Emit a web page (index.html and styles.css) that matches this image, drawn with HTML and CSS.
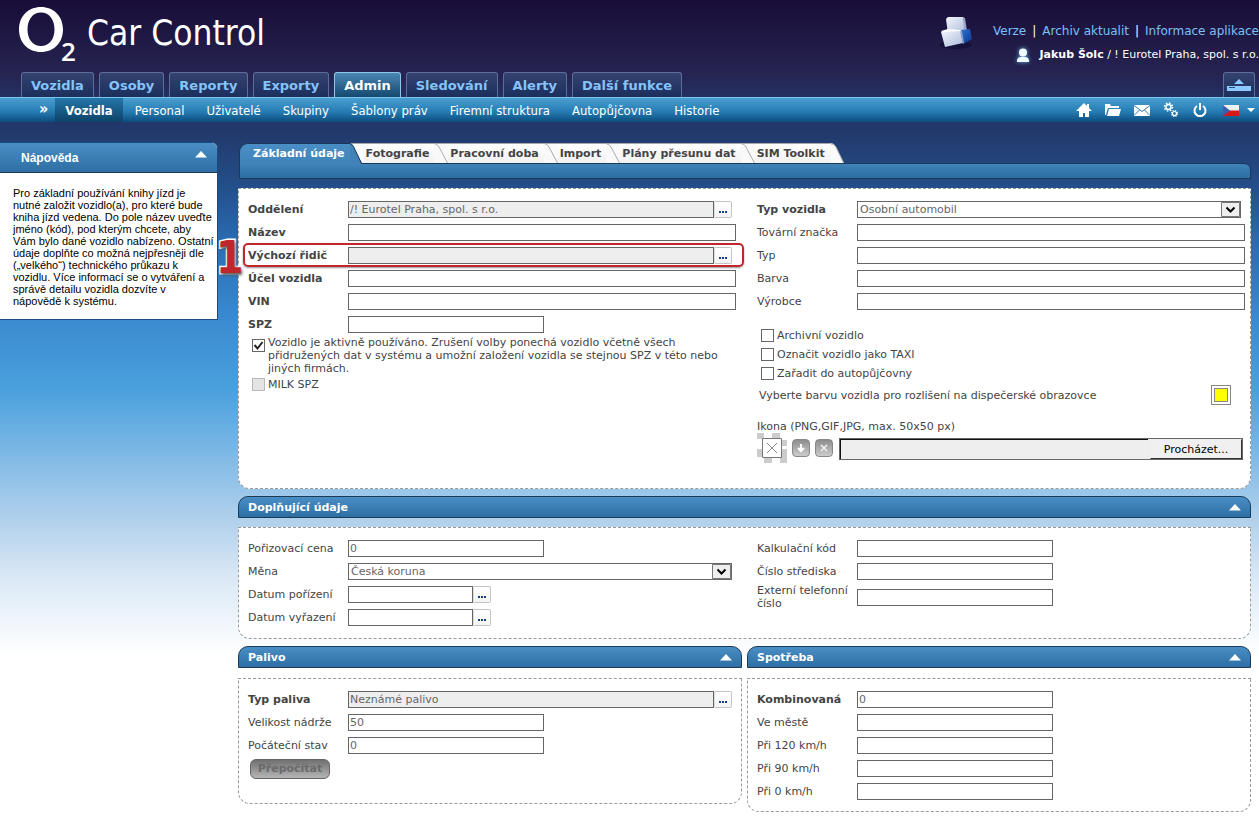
FILE: index.html
```html
<!DOCTYPE html>
<html lang="cs">
<head>
<meta charset="utf-8">
<title>O2 Car Control</title>
<link rel="stylesheet" href="styles.css">
</head>
<body>
<header class="header">
  <div class="brand">
    <svg class="logo" width="64" height="66" viewBox="0 0 64 66" role="img" aria-label="O2">
      <path fill="#fff" fill-rule="evenodd" d="M23 7C35.500 7 45 16 45 29.500S35.500 52 23 52 1 43 1 29.500 10.500 7 23 7ZM23 12.500C14.500 12.500 9.500 20 9.500 29.500S14.500 46 23 46 36.500 39 36.500 29.500 31.500 12.500 23 12.500Z"/>
      <text x="43" y="61" class="logo-sub">2</text>
    </svg>
    <h1 class="title">Car Control</h1>
  </div>
  <div class="account">
    <svg width="38" height="38" viewBox="0 0 38 38" aria-hidden="true">
      <defs>
        <linearGradient id="cube" x1="0" y1="0" x2="1" y2="1"><stop offset="0" stop-color="#f4f6fa"/><stop offset="1" stop-color="#a9b9dc"/></linearGradient>
        <linearGradient id="cubeBlue" x1="0" y1="0" x2="1" y2="1"><stop offset="0" stop-color="#2f74cf"/><stop offset="1" stop-color="#0b3594"/></linearGradient>
      </defs>
      <ellipse cx="16" cy="31" rx="16" ry="4" fill="#0a0830" opacity=".5"/>
      <path d="M6 5l2-2 15 0 3 14-1 3H8z" fill="url(#cube)"/>
      <path d="M23 3l2 1 2 13-3 1z" fill="#98a6c6"/>
      <path d="M21 16l9-1 2 10-9 5z" fill="url(#cubeBlue)"/>
      <path d="M1 17l7-2 12 1 2 2-18 2z" fill="#fff"/>
      <path d="M1 18l19-1 3 12-18 4z" fill="url(#cube)"/>
      <path d="M20 17l2 0 2 12-1 1z" fill="#8da3d3"/>
    </svg>
    <div class="account-text">
      <nav class="links"><a href="#">Verze</a><span>|</span><a href="#">Archiv aktualit</a><span>|</span><a href="#">Informace aplikace</a></nav>
      <div class="user">
        <svg class="user-icon" width="14" height="15" viewBox="0 0 14 15" aria-hidden="true"><circle cx="7" cy="4.500" r="4" fill="#eefaff"/><path d="M1 14v-2q1-3 4-3h4q3 0 4 3v2z" fill="#eefaff"/></svg>
        <span><b>Jakub Šolc</b> / ! Eurotel Praha, spol. s r.o.</span>
      </div>
    </div>
  </div>
</header>
<nav class="tabs">
  <a href="#">Vozidla</a><a href="#">Osoby</a><a href="#">Reporty</a><a href="#">Exporty</a><a href="#" class="on">Admin</a><a href="#">Sledování</a><a href="#">Alerty</a><a href="#">Další funkce</a>
  <button class="fold" type="button" aria-label="Skrýt záhlaví">
    <svg width="24" height="14" viewBox="0 0 24 14" aria-hidden="true"><path d="M12 1l5 5H7zM0 8h24v5H0z" fill="#8ccbff"/><path d="M2 9.500h6" stroke="#27487c"/></svg>
  </button>
</nav>
<nav class="subnav">
  <span class="more">»</span>
  <a href="#" class="on">Vozidla</a><a href="#">Personal</a><a href="#">Uživatelé</a><a href="#">Skupiny</a><a href="#">Šablony práv</a><a href="#">Firemní struktura</a><a href="#">Autopůjčovna</a><a href="#">Historie</a>
  <div class="tools">
    <svg width="16" height="16" viewBox="0 0 16 16" fill="#fff" aria-hidden="true"><path d="M8 1L0 9h3v6h4v-4h2v4h4V9h3l-3-3V2h-2v2z"/></svg>
    <svg width="16" height="16" viewBox="0 0 16 16" fill="#fff" aria-hidden="true"><path d="M0 2h5l1 2h8v2H3L2 9 1 13H0z"/><path d="M4 7h12l-2 7H2z"/></svg>
    <svg width="16" height="16" viewBox="0 0 16 16" aria-hidden="true"><path fill="#fff" d="M0 3h16v11H0z"/><path d="M0 3.500l8 6 8-6M0 13.500l5.500-5.500M16 13.500L10.500 8" fill="none" stroke="#2c7fb8"/></svg>
    <svg width="16" height="16" viewBox="0 0 16 16" fill="none" stroke="#fff" aria-hidden="true"><circle cx="5.500" cy="5" r="2.500" stroke-width="1.500"/><circle cx="5.500" cy="5" r="4" stroke-width="1.500" stroke-dasharray="1.600 1.540"/><circle cx="11.500" cy="11.500" r="2" stroke-width="1.200"/><circle cx="11.500" cy="11.500" r="3" stroke-width="1.200" stroke-dasharray="1.200 1.160"/></svg>
    <svg width="16" height="16" viewBox="0 0 16 16" fill="none" stroke="#fff" stroke-width="2" aria-hidden="true"><path d="M5 4a5.500 5.500 0 1 0 6 0M8 1v7"/></svg>
    <span class="lang">
      <svg width="16" height="11" viewBox="0 0 16 11" aria-hidden="true"><path fill="#f2f2f2" d="M0 0h16v6H0z"/><path fill="#d8161b" d="M0 5.500h16V11H0z"/><path fill="#3a5fae" d="M0 0l7 5.500L0 11z"/></svg>
      <svg width="8" height="5" viewBox="0 0 8 5" aria-hidden="true"><path fill="#fff" d="M0 0h8L4 4z"/></svg>
    </span>
  </div>
</nav>

<div class="page">
  <aside class="help">
    <h2 class="help-head">Nápověda
      <svg width="12" height="7" viewBox="0 0 12 7" aria-hidden="true"><path d="M6 0l6 6.500H0z" fill="#fff"/></svg>
    </h2>
    <p class="help-text">Pro základní používání knihy jízd je<br>nutné založit vozidlo(a), pro které bude<br>kniha jízd vedena. Do pole název uveďte<br>jméno (kód), pod kterým chcete, aby<br>Vám bylo dané vozidlo nabízeno. Ostatní<br>údaje doplňte co možná nejpřesněji dle<br>(„velkého“) technického průkazu k<br>vozidlu. Více informací se o vytváření a<br>správě detailu vozidla dozvíte v<br>nápovědě k systému.</p>
  </aside>

  <main class="main">
    <div class="sheet-tabs">
      <button type="button" class="sheet on">Základní údaje</button>
      <svg class="slant" width="14" height="21" viewBox="0 0 14 21" aria-hidden="true"><path d="M0 0h14v20H12z" fill="#fbfbfb"/><path d="M0 0Q2 1 3.500 3L12 21H0z" fill="#4183b9"/><path class="slant-line" d="M1 .5H14"/><path d="M0 .5Q2 1 3.500 3.500L11.500 20.500H14" fill="none" stroke="#1b3a57"/></svg>
      <button type="button" class="sheet">Fotografie</button>
      <svg class="slant" width="14" height="20" viewBox="0 0 14 20" aria-hidden="true"><path class="slant-bg" d="M0 0h14v20H0z"/><path class="slant-line" d="M0 .5H14M0 .5Q3 .5 5 4L13.500 20"/></svg>
      <button type="button" class="sheet">Pracovní doba</button>
      <svg class="slant" width="14" height="20" viewBox="0 0 14 20" aria-hidden="true"><path class="slant-bg" d="M0 0h14v20H0z"/><path class="slant-line" d="M0 .5H14M0 .5Q3 .5 5 4L13.500 20"/></svg>
      <button type="button" class="sheet">Import</button>
      <svg class="slant" width="14" height="20" viewBox="0 0 14 20" aria-hidden="true"><path class="slant-bg" d="M0 0h14v20H0z"/><path class="slant-line" d="M0 .5H14M0 .5Q3 .5 5 4L13.500 20"/></svg>
      <button type="button" class="sheet">Plány přesunu dat</button>
      <svg class="slant" width="14" height="20" viewBox="0 0 14 20" aria-hidden="true"><path class="slant-bg" d="M0 0h14v20H0z"/><path class="slant-line" d="M0 .5H14M0 .5Q3 .5 5 4L13.500 20"/></svg>
      <button type="button" class="sheet">SIM Toolkit</button>
      <svg class="slant" width="14" height="20" viewBox="0 0 14 20" aria-hidden="true"><path class="slant-bg" d="M0 0Q4 0 6 4L14 20H0z"/><path class="slant-line" d="M0 .5Q4 .5 6 4L13.500 20"/></svg>
    </div>
    <div class="sheet-bar"></div>

    <section class="panel cols panel-main">
      <div class="col">
        <div class="row strong"><label for="f1">Oddělení</label><div class="field pick"><input id="f1" class="off" value="/! Eurotel Praha, spol. s r.o." readonly><button type="button" class="dots" aria-label="Vybrat oddělení"></button></div></div>
        <div class="row strong"><label for="f2">Název</label><div class="field"><input id="f2"></div></div>
        <div class="row strong marked"><label for="f3">Výchozí řidič</label><div class="field pick"><input id="f3" class="off" readonly><button type="button" class="dots" aria-label="Vybrat řidiče"></button></div><span class="frame"></span><span class="step">1</span></div>
        <div class="row strong"><label for="f4">Účel vozidla</label><div class="field"><input id="f4"></div></div>
        <div class="row strong"><label for="f5">VIN</label><div class="field"><input id="f5"></div></div>
        <div class="row strong"><label for="f6">SPZ</label><div class="field"><input id="f6" class="short"></div></div>
        <div class="checks checks-left">
          <label class="check"><input type="checkbox" checked><span>Vozidlo je aktivně používáno. Zrušení volby ponechá vozidlo včetně všech<br>přidružených dat v systému a umožní založení vozidla se stejnou SPZ v této nebo<br>jiných firmách.</span></label>
          <label class="check"><input type="checkbox" disabled><span>MILK SPZ</span></label>
        </div>
      </div>
      <div class="col">
        <div class="row strong"><label for="g1">Typ vozidla</label><div class="field pick"><select id="g1"><option>Osobní automobil</option></select></div></div>
        <div class="row"><label for="g2">Tovární značka</label><div class="field"><input id="g2"></div></div>
        <div class="row"><label for="g3">Typ</label><div class="field"><input id="g3"></div></div>
        <div class="row"><label for="g4">Barva</label><div class="field"><input id="g4"></div></div>
        <div class="row"><label for="g5">Výrobce</label><div class="field"><input id="g5"></div></div>
        <div class="checks checks-right">
          <label class="check"><input type="checkbox"><span>Archivní vozidlo</span></label>
          <label class="check"><input type="checkbox"><span>Označit vozidlo jako TAXI</span></label>
          <label class="check"><input type="checkbox"><span>Zařadit do autopůjčovny</span></label>
        </div>
        <div class="color-row"><span>Vyberte barvu vozidla pro rozlišení na dispečerské obrazovce</span><button type="button" class="swatch" aria-label="Barva vozidla"></button></div>
        <label class="icon-label" for="g6">Ikona (PNG,GIF,JPG, max. 50x50 px)</label>
        <div class="upload">
          <svg width="30" height="30" viewBox="0 0 30 30" aria-hidden="true"><path fill="#ccc" d="M0 0h7v6H0zM15 0h8v6h-8zM23 7h7v6h-7zM0 16h6v8H0zM23 16h7v8h-7zM7 24h8v6H7zM23 24h7v6h-7z"/><path d="M5.500 5.500h19v19h-19z" fill="#fff" stroke="#777"/><path d="M10 10l10 10M20 10L10 20" stroke="#888"/></svg>
          <button type="button" class="mini" aria-label="Stáhnout ikonu"><svg width="12" height="12" viewBox="0 0 12 12" aria-hidden="true"><path d="M6 2v7M3 6l3 3 3-3" fill="none" stroke="#fff" stroke-width="2"/></svg></button>
          <button type="button" class="mini" aria-label="Smazat ikonu"><svg width="12" height="12" viewBox="0 0 12 12" aria-hidden="true"><path d="M3 3l6 6M9 3L3 9" stroke="#f2f2f2" stroke-width="1.500"/></svg></button>
          <div class="file"><input id="g6" readonly><button type="button">Procházet...</button></div>
        </div>
      </div>
    </section>

    <h2 class="bar">Doplňující údaje <svg width="12" height="7" viewBox="0 0 12 7" aria-hidden="true"><path d="M6 0l6 6.500H0z" fill="#fff"/></svg></h2>
    <section class="panel cols">
      <div class="col">
        <div class="row"><label for="h1">Pořizovací cena</label><div class="field"><input id="h1" class="short" value="0"></div></div>
        <div class="row"><label for="h2">Měna</label><div class="field pick"><select id="h2"><option>Česká koruna</option></select></div></div>
        <div class="row"><label for="h3">Datum pořízení</label><div class="field"><input id="h3" class="date"><button type="button" class="dots" aria-label="Kalendář"></button></div></div>
        <div class="row"><label for="h4">Datum vyřazení</label><div class="field"><input id="h4" class="date"><button type="button" class="dots" aria-label="Kalendář"></button></div></div>
      </div>
      <div class="col">
        <div class="row"><label for="i1">Kalkulační kód</label><div class="field"><input id="i1" class="short"></div></div>
        <div class="row"><label for="i2">Číslo střediska</label><div class="field"><input id="i2" class="short"></div></div>
        <div class="row tall"><label for="i3">Externí telefonní číslo</label><div class="field"><input id="i3" class="short"></div></div>
      </div>
    </section>

    <div class="halves">
      <div>
        <h2 class="bar">Palivo <svg width="12" height="7" viewBox="0 0 12 7" aria-hidden="true"><path d="M6 0l6 6.500H0z" fill="#fff"/></svg></h2>
        <section class="panel panel-fuel">
          <div class="col">
            <div class="row strong"><label for="j1">Typ paliva</label><div class="field pick"><input id="j1" class="off" value="Neznámé palivo" readonly><button type="button" class="dots" aria-label="Vybrat palivo"></button></div></div>
            <div class="row"><label for="j2">Velikost nádrže</label><div class="field"><input id="j2" class="short" value="50"></div></div>
            <div class="row"><label for="j3">Počáteční stav</label><div class="field"><input id="j3" class="short" value="0"></div></div>
            <button type="button" class="recount" disabled>Přepočítat</button>
          </div>
        </section>
      </div>
      <div>
        <h2 class="bar">Spotřeba <svg width="12" height="7" viewBox="0 0 12 7" aria-hidden="true"><path d="M6 0l6 6.500H0z" fill="#fff"/></svg></h2>
        <section class="panel panel-use">
          <div class="col">
            <div class="row strong"><label for="k1">Kombinovaná</label><div class="field"><input id="k1" class="short" value="0"></div></div>
            <div class="row"><label for="k2">Ve městě</label><div class="field"><input id="k2" class="short"></div></div>
            <div class="row"><label for="k3">Při 120 km/h</label><div class="field"><input id="k3" class="short"></div></div>
            <div class="row"><label for="k4">Při 90 km/h</label><div class="field"><input id="k4" class="short"></div></div>
            <div class="row"><label for="k5">Při 0 km/h</label><div class="field"><input id="k5" class="short"></div></div>
          </div>
        </section>
      </div>
    </div>
  </main>
</div>
</body>
</html>
```

FILE: styles.css
```css
* { box-sizing: border-box; }
body {
  margin: 0;
  font: 11px/13px "DejaVu Sans", sans-serif;
  color: #444;
  background: #fff linear-gradient(#180d38 0, #262350 72px, #233163 97px, #22386b 130px, #24508b 190px, #2a6bb0 240px, #3a8bd0 320px, #4aa0dd 390px, #8fc1e8 475px, #b5d2ec 525px, #dbe9f6 580px, #fff 655px) no-repeat;
}
a { color: inherit; text-decoration: none; }
h1, h2, p { margin: 0; }
button, input, select { font: inherit; color: inherit; border-radius: 0; padding: 0; }
button { cursor: pointer; }

.header { display: flex; justify-content: space-between; height: 72px; }
.brand { display: flex; padding-left: 18px; }
.logo { overflow: visible; }
.logo-sub { font: 600 26px "Open Sans", "Noto Sans", sans-serif; fill: #fff; }
.title { margin-left: 5px; padding-top: 13px; font: 35px/40px "DejaVu Sans Condensed", "DejaVu Sans", sans-serif; color: #fff; }
.account { display: flex; gap: 15px; padding-top: 14px; color: #fff; }
.account-text { display: flex; flex-direction: column; align-items: flex-end; gap: 8px; padding-top: 9px; white-space: nowrap; }
.links { display: flex; gap: 6px; font-size: 12px; line-height: 16px; }
.links a { color: #7cc0f8; }
.user { display: flex; align-items: center; gap: 10px; line-height: 16px; }
.user-icon { filter: drop-shadow(0 0 2px #6fb6e8); }

.tabs { display: flex; gap: 5px; padding: 0 4px 0 21px; }
.tabs a {
  height: 25px; padding: 0 9px; border: 1px solid #5d6d98; border-bottom: 0; border-radius: 3px 3px 0 0;
  background: linear-gradient(#35426f, #1b2f5d); color: #84c4fb; font-weight: bold; font-size: 13px; line-height: 25px;
}
.tabs .on { border-color: #8fc8e4; background: linear-gradient(#4a86b4, #15496f); color: #fff; }
.fold { display: flex; justify-content: center; align-items: center; width: 32px; height: 25px; margin-left: auto; border: 1px solid #5d6d98; border-bottom: 0; border-radius: 3px 3px 0 0; background: linear-gradient(#35426f, #1b2f5d); }

.subnav {
  display: flex; height: 25px; padding-right: 4px; border-top: 1px solid #7cc6ee;
  background: linear-gradient(#4a9fd1, #2479b0 60%, #0c4c7d);
  color: #fff; font: 13px/26px "DejaVu Sans Condensed", "DejaVu Sans", sans-serif;
}
.subnav a { height: 24px; margin-right: 2px; padding: 0 10px; }
.subnav .on { background: linear-gradient(#2377a9, #0d4268); font-weight: bold; }
.more { padding: 0 7px 0 39px; font-size: 16px; line-height: 22px; font-weight: bold; }
.tools { display: flex; align-items: center; gap: 13px; margin-left: auto; }
.lang { display: flex; align-items: center; gap: 8px; margin-left: 2px; }

.page { display: grid; grid-template-columns: 218px minmax(0, 1fr); gap: 20px; padding: 20px 8px 4px 0; align-items: start; }
.help { border: 1px solid #1d4a7d; border-left: 0; border-radius: 0 6px 0 0; background: #fff; overflow: hidden; }
.help-head {
  display: flex; justify-content: space-between; align-items: center; height: 30px; padding: 0 10px 0 21px;
  border-bottom: 1px solid #1b3a57; background: linear-gradient(#4a8ec6, #2d6fa3);
  color: #fff; font: bold 12px/30px "Liberation Sans", sans-serif;
}
.help-head svg { margin-bottom: 6px; }
.help-text { padding: 14px 0 12px 13px; color: #000; font: 11px/12px "Liberation Sans", sans-serif; white-space: nowrap; }

.main { padding-top: 1px; }
.sheet-tabs { display: flex; align-items: flex-start; height: 20px; padding-left: 1px; }
.sheet { height: 20px; padding: 0 5px 0 2px; border: 0; border-top: 1px solid #aaa; background: linear-gradient(#fff, #f1f1f1); color: #444; font-weight: bold; line-height: 18px; }
.sheet.on { position: relative; height: 21px; padding: 0 5px 1px 13px; border: 1px solid #1b3a57; border-width: 1px 0 0 1px; border-radius: 9px 0 0 0; background: linear-gradient(#4a8ec6, #3f83b9); color: #fff; }
.slant { flex: none; position: relative; }
.slant-bg { fill: #f9f9f9; }
.slant-line { fill: none; stroke: #aaa; }
.sheet-bar { height: 16px; margin-left: 1px; border: 1px solid #1b3a57; border-radius: 0 7px 0 0; background: linear-gradient(#3f83b9, #2d6fa3); }

.panel { border: 1px dashed #999; border-radius: 0 0 12px 12px; background: #fff; padding: 12px 5px 12px 9px; }
.panel-main { margin-top: 9px; padding-bottom: 25px; }
.cols { display: grid; grid-template-columns: 1fr 1fr; gap: 21px; }
.col { display: flex; flex-direction: column; gap: 6px; }
.row { position: relative; display: grid; grid-template-columns: 100px minmax(0, 1fr); align-items: center; min-height: 17px; }
.strong label { font-weight: bold; }
.tall { margin-top: -2px; }
.field { display: flex; }
.pick { padding-right: 4px; }
.field input, .field select { flex: 1 1 0; min-width: 0; height: 17px; padding: 0 1px; border: 1px solid #666; background: #fff; color: #666; }
.field .off { background: #eee; }
.field .short { flex: 0 1 196px; }
.field .date { flex: 0 1 125px; }
.field select {
  appearance: none; height: 17px; padding: 0 20px 0 2px;
  background: #fff url("data:image/svg+xml,%3Csvg xmlns='http://www.w3.org/2000/svg' width='19' height='15'%3E%3Cpath d='M.5.5h18v14H.5z' fill='%23eee' stroke='%23777'/%3E%3Cpath d='M5.500 5.500l4 4 4-4' fill='none' stroke='%23000' stroke-width='2'/%3E%3C/svg%3E") right center no-repeat;
}
.dots {
  width: 18px; height: 17px; border: 1px solid #c4c4c4; border-left-color: #ddd; border-radius: 2px;
  background:
    linear-gradient(#123f80, #123f80) 4px 9px / 2px 2px no-repeat,
    linear-gradient(#123f80, #123f80) 7px 9px / 2px 2px no-repeat,
    linear-gradient(#123f80, #123f80) 10px 9px / 2px 2px no-repeat,
    linear-gradient(#fff, #f4f4f4);
}

.frame { position: absolute; inset: -4px -8px -3px -5px; border: 2px solid #c0272d; border-radius: 5px; box-shadow: 0 1px 2px #999; pointer-events: none; }
.step { position: absolute; left: -32px; top: -14px; font: bold 44px/50px "DejaVu Sans Condensed", "DejaVu Sans", sans-serif; color: #c0272d; -webkit-text-stroke: 3px #fff; paint-order: stroke fill; text-shadow: 1px 2px 3px #555; }

.checks { display: flex; flex-direction: column; }
.checks-left { gap: 3px; padding: 1px 0 0 4px; margin-top: -4px; }
.checks-right { gap: 6px; padding: 13px 0 0 4px; }
.check { display: flex; align-items: flex-start; gap: 3px; white-space: nowrap; }
.check input { appearance: none; flex: none; width: 13px; height: 13px; margin: 0; border: 1px solid #666; background: #fff; }
.checks-left input { margin-top: 3px; }
.checks-left .check + .check input { margin-top: 0; }
.check input:checked { background: url("data:image/svg+xml,%3Csvg xmlns='http://www.w3.org/2000/svg' width='11' height='11'%3E%3Cpath d='M1.500 5l3 3.500L9.500 2' fill='none' stroke='%23222' stroke-width='2'/%3E%3C/svg%3E") center no-repeat; }
.check input:disabled { border-color: #b8b8b8; background: #e4e4e4; }
.color-row { display: flex; justify-content: space-between; align-items: center; margin-top: -1px; padding: 0 14px 0 2px; white-space: nowrap; }
.swatch { width: 20px; height: 20px; padding: 0; border: 1px solid #888; background: #ff0; box-shadow: inset 0 0 0 2px #fff, inset 0 0 0 3px #888; }
.icon-label { margin-top: 9px; }
.upload { display: flex; align-items: center; gap: 5px; margin-top: -6px; }
.mini { display: grid; place-items: center; width: 18px; height: 18px; border: 1px solid #888; border-radius: 4px; background: linear-gradient(#8c8c8c, #ccc); }
.file { display: flex; flex: 1; height: 22px; margin: 2px 2px 0 1px; border: 1px solid #666; background: #eee; }
.file input { flex: 1; min-width: 0; border: 1px solid #111; border-width: 1px 0 0 1px; background: #eee; }
.file button { width: 92px; border: 1px solid #eee; border-right-color: #333; border-bottom-color: #333; margin-left: 2px; background: #f0f0f0; color: #000; }

.bar {
  display: flex; justify-content: space-between; align-items: center; height: 22px; margin: 7px 0 9px; padding: 2px 9px 0;
  border: 1px solid #1b3a57; border-radius: 10px 10px 0 0; background: linear-gradient(#4a8ec6, #2d6fa3);
  color: #fff; font-size: 11px; line-height: 18px;
}
.bar svg { margin-bottom: 2px; }
.halves { display: grid; grid-template-columns: 1fr 1fr; gap: 5px; align-items: start; }
.halves .bar { margin-bottom: 10px; }
.panel-fuel { padding-bottom: 24px; }
.panel-use { padding-bottom: 11px; }
.recount { align-self: flex-start; width: 80px; height: 20px; margin: -1px 0 0 2px; border: 1px solid #666; border-radius: 6px; background: linear-gradient(#707070, #b5b5b5); color: #6a6a6a; font-weight: bold; line-height: 16px; }
```
